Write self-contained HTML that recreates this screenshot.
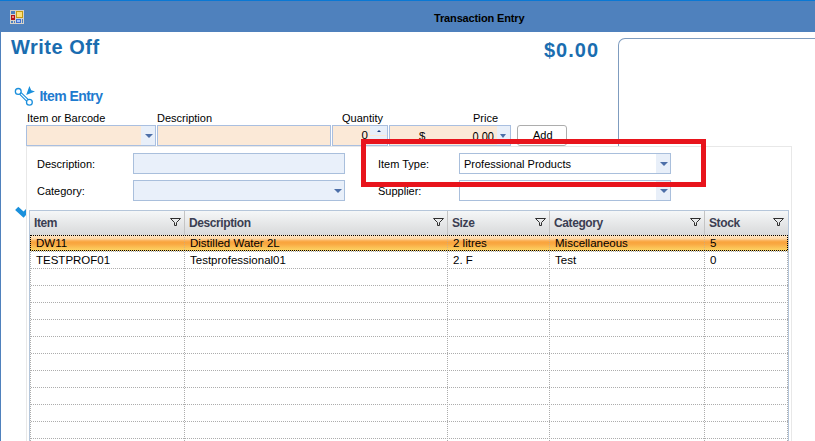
<!DOCTYPE html>
<html><head><meta charset="utf-8">
<style>
*{box-sizing:border-box;margin:0;padding:0}
html,body{width:815px;height:441px;overflow:hidden;background:#fff;font-family:"Liberation Sans",sans-serif;position:relative}
.a{position:absolute}
.t{position:absolute;white-space:nowrap;line-height:1}
#title{left:0;top:0;width:815px;height:32px;background:#4f81bd;border-top:1px solid #0a78d4}
#lb{left:0;top:32px;width:1px;height:409px;background:#4f81bd}
.lbl{font-size:11px;color:#000}
.inp{position:absolute;border:1px solid #a9bfe0;background:#fbe9d7;height:21px}
.btnbg{position:absolute;top:0;bottom:0;background:#e8eff9}
.arr{position:absolute;width:0;height:0;border-left:4px solid transparent;border-right:4px solid transparent;border-top:4px solid #4d6fa8}
.finp{position:absolute;border:1px solid #a9bfdc;background:#e9f0fa;height:21px}
.cmb{position:absolute;border:1px solid #a9bfdc;background:#fff;height:21px}
#grid{left:29px;top:210px;width:760px;height:240px;border:1px solid #b1c3d9;background:#fff}
.hdr{position:absolute;top:0;height:24px;background:linear-gradient(#f7f7f7,#dedede)}
.hs{position:absolute;top:0;width:1px;height:24px;background:#c2c2c2}
.ht{position:absolute;font-size:12px;font-weight:700;color:#3b3e52;line-height:1;letter-spacing:-0.4px}
.rowline{position:absolute;left:0;width:758px;height:1px;background-image:linear-gradient(90deg,transparent 50%,#adadad 50%);background-size:2px 1px}
.colline{position:absolute;width:1px;background-image:linear-gradient(transparent 50%,#adadad 50%);background-size:1px 2px}
.ct{position:absolute;font-size:11.5px;color:#000;line-height:1}
</style></head><body>
<div id="title" class="a"></div>
<div id="lb" class="a"></div>
<!-- app icon -->
<svg class="a" style="left:10px;top:10px" width="14" height="14" viewBox="0 0 14 14" shape-rendering="crispEdges">
<rect x="0" y="0" width="14" height="14" fill="#d6d2ca"/>
<rect x="1" y="1" width="4" height="3" fill="#4a7fc0"/>
<rect x="1" y="5" width="4" height="5" fill="#b3161a"/>
<rect x="2" y="6" width="2" height="2" fill="#f08080"/>
<rect x="6" y="1" width="7" height="7" fill="#c49a12"/>
<rect x="7" y="2" width="5" height="5" fill="#fde07a"/>
<rect x="6" y="9" width="5" height="4" fill="#3e6fd0"/>
<rect x="7" y="10" width="3" height="2" fill="#9cc0ff"/>
<rect x="1" y="11" width="2" height="2" fill="#4a7fc0"/>
<rect x="4" y="11" width="1" height="2" fill="#4a7fc0"/>
<rect x="12" y="9" width="1" height="4" fill="#4a7fc0"/>
</svg>
<div class="t" style="left:434px;top:13px;font-size:11px;font-weight:700;color:#000;letter-spacing:-0.15px">Transaction Entry</div>

<div class="t" style="left:11px;top:37px;font-size:20px;font-weight:700;color:#1a6db0;letter-spacing:0.5px">Write Off</div>
<div class="t" style="left:544px;top:40px;font-size:20px;font-weight:700;color:#1a6db0;letter-spacing:1px">$0.00</div>
<div class="a" style="left:618px;top:38px;width:260px;height:108px;border:1px solid #7f9cbf;border-bottom:none;border-radius:7px 7px 0 0"></div>

<!-- Item Entry -->
<svg class="a" style="left:10px;top:82px" width="30" height="26" viewBox="0 0 30 26">
<circle cx="8.25" cy="9.4" r="2.9" fill="none" stroke="#1a8fdc" stroke-width="1.3"/>
<circle cx="19.4" cy="20.3" r="2.9" fill="none" stroke="#1a8fdc" stroke-width="1.3"/>
<path d="M9.55 12.22 L16.56 19.06 M11.09 10.64 L18.1 17.48" stroke="#1a8fdc" stroke-width="1.1"/>
<path d="M16.2 12.9 L19.4 4.1 L21.2 8.3 L25 9.4 Z" fill="#1a8fdc"/>
</svg>
<div class="t" style="left:39.5px;top:89.3px;font-size:14px;font-weight:700;color:#1e7bcf;letter-spacing:-0.55px">Item Entry</div>

<div class="t lbl" style="left:27px;top:113px">Item or Barcode</div>
<div class="t lbl" style="left:157px;top:113px">Description</div>
<div class="t lbl" style="left:342px;top:113px">Quantity</div>
<div class="t lbl" style="left:473px;top:113px">Price</div>

<div class="inp" style="left:26px;top:125px;width:130px"><div class="btnbg" style="left:114px;width:14px"></div><div class="arr" style="left:118px;top:8px"></div></div>
<div class="inp" style="left:157px;top:125px;width:174px"></div>
<div class="inp" style="left:332px;top:125px;width:56px"><div class="btnbg" style="left:37px;width:17px;bottom:10px"></div><div class="btnbg" style="left:37px;width:17px;top:10px"></div>
<div class="a" style="left:44px;top:4px;width:0;height:0;border-left:2px solid transparent;border-right:2px solid transparent;border-bottom:2px solid #1a3d80"></div>
<div class="t" style="left:28.5px;top:4px;font-size:11.5px;color:#000">0</div></div>
<div class="inp" style="left:389px;top:125px;width:122px"><div class="btnbg" style="left:107px;width:13px"></div><div class="arr" style="left:110px;top:8px;border-left-width:3.5px;border-right-width:3.5px;border-top-width:4px"></div>
<div class="t" style="left:29px;top:4.5px;font-size:11.5px;color:#000">$</div>
<div class="t" style="left:82.5px;top:5px;font-size:11px;transform:scaleY(1.08);transform-origin:0 0;color:#000">0.00</div></div>
<div class="a" style="left:517px;top:125px;width:50px;height:21px;border:1px solid #adadad;border-radius:3px;background:#fff"></div>
<div class="t lbl" style="left:533px;top:130px">Add</div>

<!-- filter panel -->
<div class="a" style="left:26px;top:146px;width:766px;height:300px;border:1px solid #e8e8e8;background:#fff"></div>
<div class="t lbl" style="left:37px;top:159px">Description:</div>
<div class="t lbl" style="left:37px;top:186px">Category:</div>
<div class="finp" style="left:133px;top:153px;width:212px"></div>
<div class="finp" style="left:133px;top:180px;width:212px"><div class="arr" style="left:200px;top:8px"></div></div>
<div class="t lbl" style="left:378px;top:159px">Item Type:</div>
<div class="t lbl" style="left:378px;top:186px">Supplier:</div>
<div class="cmb" style="left:459px;top:153px;width:212px"><div class="btnbg" style="left:196px;width:14px"></div><div class="arr" style="left:200px;top:8px"></div>
<div class="t" style="left:4px;top:5px;font-size:11px;color:#000">Professional Products</div></div>
<div class="cmb" style="left:459px;top:180px;width:212px"><div class="btnbg" style="left:196px;width:14px"></div><div class="arr" style="left:200px;top:8px"></div></div>

<!-- chevron -->
<svg class="a" style="left:8px;top:198px" width="18" height="26" viewBox="0 0 18 26"><path d="M7.1 12.1 L10.3 8.8 L15.5 13.5 L18 11 L18 17 L15.6 19.8 Z" fill="#1a90dc"/></svg>
<!-- grid -->
<div class="a" style="left:29px;top:210px;width:760px;height:240px;border:1px solid #b5c6da;background:#fff"></div>
<div class="a" style="left:30px;top:211px;width:758px;height:24px;background:linear-gradient(#f5f7f8,#d8d9da)"></div>
<div class="a" style="left:184px;top:211px;width:1px;height:24px;background:#c4c4c4"></div>
<div class="a" style="left:447px;top:211px;width:1px;height:24px;background:#c4c4c4"></div>
<div class="a" style="left:549px;top:211px;width:1px;height:24px;background:#c4c4c4"></div>
<div class="a" style="left:704px;top:211px;width:1px;height:24px;background:#c4c4c4"></div>
<div class="t ht" style="left:34px;top:217px">Item</div>
<div class="t ht" style="left:189px;top:217px">Description</div>
<div class="t ht" style="left:452px;top:217px">Size</div>
<div class="t ht" style="left:554px;top:217px">Category</div>
<div class="t ht" style="left:709px;top:217px">Stock</div>
<svg class="a" style="left:170px;top:217px" width="12" height="10" viewBox="0 0 12 10"><path d="M0.5 1.5 H10.5 L6.5 5.5 V8.5 H4.5 V5.5 Z" fill="none" stroke="#2e2e2e" stroke-width="1" stroke-linejoin="miter"/></svg>
<svg class="a" style="left:433px;top:217px" width="12" height="10" viewBox="0 0 12 10"><path d="M0.5 1.5 H10.5 L6.5 5.5 V8.5 H4.5 V5.5 Z" fill="none" stroke="#2e2e2e" stroke-width="1" stroke-linejoin="miter"/></svg>
<svg class="a" style="left:535px;top:217px" width="12" height="10" viewBox="0 0 12 10"><path d="M0.5 1.5 H10.5 L6.5 5.5 V8.5 H4.5 V5.5 Z" fill="none" stroke="#2e2e2e" stroke-width="1" stroke-linejoin="miter"/></svg>
<svg class="a" style="left:690px;top:217px" width="12" height="10" viewBox="0 0 12 10"><path d="M0.5 1.5 H10.5 L6.5 5.5 V8.5 H4.5 V5.5 Z" fill="none" stroke="#2e2e2e" stroke-width="1" stroke-linejoin="miter"/></svg>
<svg class="a" style="left:773px;top:217px" width="12" height="10" viewBox="0 0 12 10"><path d="M0.5 1.5 H10.5 L6.5 5.5 V8.5 H4.5 V5.5 Z" fill="none" stroke="#2e2e2e" stroke-width="1" stroke-linejoin="miter"/></svg>
<div class="a" style="left:30px;top:235px;width:758px;height:16px;background:linear-gradient(#fee4c2 0px,#fee0b8 2px,#fdd4a0 4px,#fbb45e 5.5px,#f9a43c 7px,#f9a842 9px,#fbbd52 12px,#fdd262 15px)"></div>
<div class="a" style="left:30px;top:235px;width:758px;height:1px;background-image:linear-gradient(90deg,transparent 50%,#000 50%);background-size:2px 1px"></div>
<div class="a" style="left:30px;top:250px;width:758px;height:1px;background-image:linear-gradient(90deg,#000 50%,transparent 50%);background-size:2px 1px"></div>
<div class="a" style="left:30px;top:235px;width:1px;height:16px;background-image:linear-gradient(#000 50%,transparent 50%);background-size:1px 2px"></div>
<div class="a" style="left:787px;top:235px;width:1px;height:16px;background-image:linear-gradient(#000 50%,transparent 50%);background-size:1px 2px"></div>
<div class="rowline" style="left:30px;top:251px"></div>
<div class="rowline" style="left:30px;top:268px"></div>
<div class="rowline" style="left:30px;top:285px"></div>
<div class="rowline" style="left:30px;top:302px"></div>
<div class="rowline" style="left:30px;top:319px"></div>
<div class="rowline" style="left:30px;top:336px"></div>
<div class="rowline" style="left:30px;top:353px"></div>
<div class="rowline" style="left:30px;top:370px"></div>
<div class="rowline" style="left:30px;top:387px"></div>
<div class="rowline" style="left:30px;top:404px"></div>
<div class="rowline" style="left:30px;top:421px"></div>
<div class="rowline" style="left:30px;top:438px"></div>
<div class="colline" style="left:30px;top:251px;height:200px"></div>
<div class="colline" style="left:787px;top:251px;height:200px"></div>
<div class="colline" style="left:184px;top:251px;height:200px"></div>
<div class="colline" style="left:447px;top:251px;height:200px"></div>
<div class="colline" style="left:549px;top:251px;height:200px"></div>
<div class="colline" style="left:704px;top:251px;height:200px"></div>
<div class="colline" style="left:184px;top:236px;height:14px;opacity:.5"></div>
<div class="colline" style="left:447px;top:236px;height:14px;opacity:.5"></div>
<div class="colline" style="left:549px;top:236px;height:14px;opacity:.5"></div>
<div class="colline" style="left:704px;top:236px;height:14px;opacity:.5"></div>
<div class="t ct" style="left:36px;top:238px">DW11</div>
<div class="t ct" style="left:190px;top:238px">Distilled Water 2L</div>
<div class="t ct" style="left:453px;top:238px">2 litres</div>
<div class="t ct" style="left:555px;top:238px">Miscellaneous</div>
<div class="t ct" style="left:710px;top:238px">5</div>
<div class="t ct" style="left:36px;top:255px">TESTPROF01</div>
<div class="t ct" style="left:190px;top:255px">Testprofessional01</div>
<div class="t ct" style="left:453px;top:255px">2. F</div>
<div class="t ct" style="left:555px;top:255px">Test</div>
<div class="t ct" style="left:710px;top:255px">0</div>
<!-- red rect -->
<div class="a" style="left:361px;top:139px;width:345px;height:48px;border:5px solid #e8141c"></div>
</body></html>
